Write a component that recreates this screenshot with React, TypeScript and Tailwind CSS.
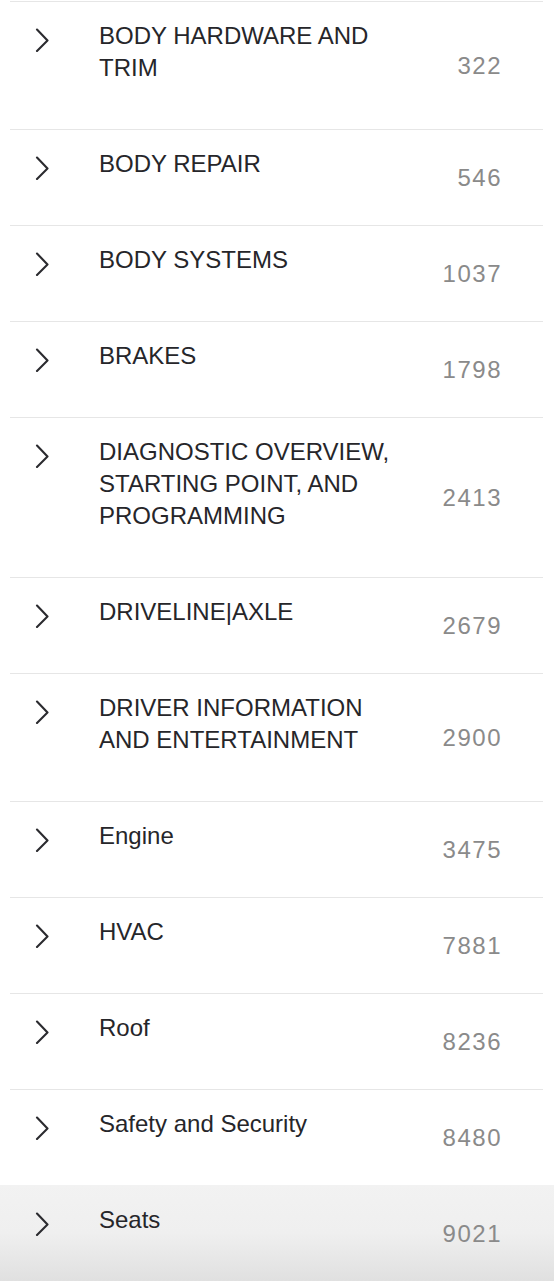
type Category = {
  name: string;
  count: number;
};

const categories: Category[] = [
  { name: "BODY HARDWARE AND TRIM", count: 322 },
  { name: "BODY REPAIR", count: 546 },
  { name: "BODY SYSTEMS", count: 1037 },
  { name: "BRAKES", count: 1798 },
  { name: "DIAGNOSTIC OVERVIEW, STARTING POINT, AND PROGRAMMING", count: 2413 },
  { name: "DRIVELINE|AXLE", count: 2679 },
  { name: "DRIVER INFORMATION AND ENTERTAINMENT", count: 2900 },
  { name: "Engine", count: 3475 },
  { name: "HVAC", count: 7881 },
  { name: "Roof", count: 8236 },
  { name: "Safety and Security", count: 8480 },
  { name: "Seats", count: 9021 },
];

function Chevron() {
  return (
    <svg width="14" height="24" viewBox="0 0 14 24" fill="none" className="block shrink-0">
      <polyline
        points="2,1.5 12.5,12.5 2,23"
        stroke="#2b2b2f"
        strokeWidth="2.1"
        strokeLinecap="round"
        strokeLinejoin="round"
      />
    </svg>
  );
}

function Row({ item, active }: { item: Category; active: boolean }) {
  return (
    <div
      className={
        active
          ? "bg-gradient-to-b from-[#f2f2f2] via-[#efefef] to-[#e0e0e0]"
          : "bg-white"
      }
    >
      <div
        className={
          "ml-[10px] mr-[11px] border-t flex items-center pl-[25px] pr-[41px] " +
          (active ? "border-transparent" : "border-[#e6e6e6]")
        }
      >
        <div className="flex flex-1 items-start self-stretch pt-[18px] pb-[45px]">
          <div className="w-[14px] h-[32px] pt-[8px] shrink-0">
            <Chevron />
          </div>
          <div className="ml-[50px] flex-1 text-[24px] leading-[32px] text-[#26262a]">
            {item.name}
          </div>
        </div>
        <div className="w-[96px] shrink-0 text-right text-[24px] leading-[32px] tracking-[1.5px] text-[#8a8a8a]">
          {item.count}
        </div>
      </div>
    </div>
  );
}

export default function App() {
  return (
    <main
      className="w-[554px] h-[1284px] overflow-hidden bg-white pt-px"
      style={{ fontFamily: '"Liberation Sans", Arial, sans-serif' }}
    >
      {categories.map((c, i) => (
        <Row key={c.name} item={c} active={i === categories.length - 1} />
      ))}
    </main>
  );
}
